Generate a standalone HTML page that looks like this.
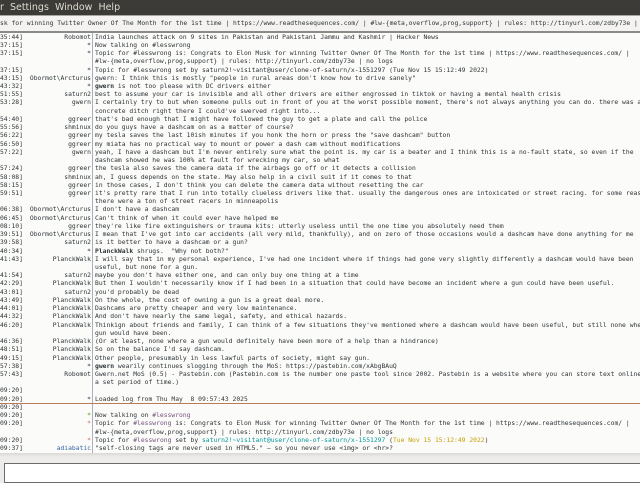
<!DOCTYPE html>
<html><head><meta charset="utf-8"><style>
*{margin:0;padding:0;box-sizing:border-box}
body{width:640px;height:480px;overflow:hidden;background:#edeceb;position:relative;font-family:"DejaVu Sans Mono","Liberation Mono",monospace;color:#2e3436}
#menu{position:absolute;left:0;top:0;width:640px;height:15px;background:#3c3b37;color:#dfdbd2;font-family:"DejaVu Sans","Liberation Sans",sans-serif;font-size:9.5px;line-height:15px;white-space:pre}
#topic{position:absolute;left:0;top:15px;width:640px;height:18px;background:#f4f3f2;border-top:1px solid #a8a6a2;border-bottom:2px solid #8c8a86;font-size:6.35px;line-height:15px;white-space:pre;overflow:hidden;padding-left:0}
#chat{position:absolute;left:0;top:33px;width:640px;height:420px;background:#fbfbfa;overflow:hidden}
#sep{position:absolute;left:92px;top:0;width:1px;height:420px;background:#aab0bb}
.r{position:absolute;left:0;width:640px;height:8.23px;font-size:6.35px;line-height:8.23px;white-space:pre}
.t{position:absolute;left:-15.3px;top:0}
.n{position:absolute;right:549px;top:0;text-align:right}
.m{position:absolute;left:95px;top:0}
b{font-weight:bold}
.g{color:#4e9a06}.p{color:#75507b}.c{color:#06989a}.y{color:#c4a000}.bl{color:#3465a4}.rd{color:#cc6666}
#mark{position:absolute;left:0;top:370px;width:640px;height:1px;background:#b87a5a}
#inp{position:absolute;left:4px;top:463px;width:640px;height:20px;background:#fff;border:1px solid #6b6b6b;border-right:none}
#shade{position:absolute;left:0;top:453px;width:640px;height:4px;background:linear-gradient(#d9d8d6,#edeceb)}
</style></head><body>
<div id="menu">r  Settings  Window  Help</div>
<div id="topic">sk for winning Twitter Owner Of The Month for the 1st time | https://www.readthesequences.com/ | #lw-{meta,overflow,prog,support} | rules: http://tinyurl.com/zdby73e |</div>
<div id="chat">
<div id="sep"></div>
<div id="mark"></div>
<div id="rows"></div>
</div>
<div id="shade"></div>
<div id="inp"></div>
<div style="position:absolute;left:0;top:0">
</div>
<script></script>
<div id="lines" style="position:absolute;left:0;top:33.6px;width:640px;height:420px;overflow:hidden">
<div class="r" style="top:0px"><span class="t">[12:35:44]</span><span class="n">Robomot</span><span class="m">India launches attack on 9 sites in Pakistan and Pakistani Jammu and Kashmir | Hacker News</span></div>
<div class="r" style="top:8.23px"><span class="t">[12:37:15]</span><span class="n">*</span><span class="m">Now talking on #lesswrong</span></div>
<div class="r" style="top:16.46px"><span class="t">[12:37:15]</span><span class="n">*</span><span class="m">Topic for #lesswrong is: Congrats to Elon Musk for winning Twitter Owner Of The Month for the 1st time | https://www.readthesequences.com/ |</span></div>
<div class="r" style="top:24.69px"><span class="m">#lw-{meta,overflow,prog,support} | rules: http://tinyurl.com/zdby73e | no logs</span></div>
<div class="r" style="top:32.92px"><span class="t">[12:37:15]</span><span class="n">*</span><span class="m">Topic for #lesswrong set by saturn2!~visitant@user/clone-of-saturn/x-1551297 (Tue Nov 15 15:12:49 2022)</span></div>
<div class="r" style="top:41.15px"><span class="t">[12:43:15]</span><span class="n">Obormot\Arcturus</span><span class="m">gwern: I think this is mostly "people in rural areas don't know how to drive sanely"</span></div>
<div class="r" style="top:49.38px"><span class="t">[12:43:32]</span><span class="n">*</span><span class="m"><b>gwern</b> is not too please with DC drivers either</span></div>
<div class="r" style="top:57.61px"><span class="t">[12:51:55]</span><span class="n">saturn2</span><span class="m">best to assume your car is invisible and all other drivers are either engrossed in tiktok or having a mental health crisis</span></div>
<div class="r" style="top:65.84px"><span class="t">[12:53:28]</span><span class="n">gwern</span><span class="m">I certainly try to but when someone pulls out in front of you at the worst possible moment, there's not always anything you can do. there was a</span></div>
<div class="r" style="top:74.07px"><span class="m">concrete ditch right there I could've swerved right into...</span></div>
<div class="r" style="top:82.3px"><span class="t">[12:54:40]</span><span class="n">ggreer</span><span class="m">that's bad enough that I might have followed the guy to get a plate and call the police</span></div>
<div class="r" style="top:90.53px"><span class="t">[12:55:56]</span><span class="n">shminux</span><span class="m">do you guys have a dashcam on as a matter of course?</span></div>
<div class="r" style="top:98.76px"><span class="t">[12:56:22]</span><span class="n">ggreer</span><span class="m">my tesla saves the last 10ish minutes if you honk the horn or press the "save dashcam" button</span></div>
<div class="r" style="top:106.99px"><span class="t">[12:56:50]</span><span class="n">ggreer</span><span class="m">my miata has no practical way to mount or power a dash cam without modifications</span></div>
<div class="r" style="top:115.22px"><span class="t">[12:57:22]</span><span class="n">gwern</span><span class="m">yeah, I have a dashcam but I'm never entirely sure what the point is. my car is a beater and I think this is a no-fault state, so even if the</span></div>
<div class="r" style="top:123.45px"><span class="m">dashcam showed he was 100% at fault for wrecking my car, so what</span></div>
<div class="r" style="top:131.68px"><span class="t">[12:57:24]</span><span class="n">ggreer</span><span class="m">the tesla also saves the camera data if the airbags go off or it detects a collision</span></div>
<div class="r" style="top:139.91px"><span class="t">[12:58:08]</span><span class="n">shminux</span><span class="m">ah, I guess depends on the state. May also help in a civil suit if it comes to that</span></div>
<div class="r" style="top:148.14px"><span class="t">[12:58:15]</span><span class="n">ggreer</span><span class="m">in those cases, I don't think you can delete the camera data without resetting the car</span></div>
<div class="r" style="top:156.37px"><span class="t">[12:59:51]</span><span class="n">ggreer</span><span class="m">it's pretty rare that I run into totally clueless drivers like that. usually the dangerous ones are intoxicated or street racing. for some reason</span></div>
<div class="r" style="top:164.6px"><span class="m">there were a ton of street racers in minneapolis</span></div>
<div class="r" style="top:172.83px"><span class="t">[13:06:38]</span><span class="n">Obormot\Arcturus</span><span class="m">I don't have a dashcam</span></div>
<div class="r" style="top:181.06px"><span class="t">[13:06:45]</span><span class="n">Obormot\Arcturus</span><span class="m">Can't think of when it could ever have helped me</span></div>
<div class="r" style="top:189.29px"><span class="t">[13:08:10]</span><span class="n">ggreer</span><span class="m">they're like fire extinguishers or trauma kits: utterly useless until the one time you absolutely need them</span></div>
<div class="r" style="top:197.52px"><span class="t">[13:39:51]</span><span class="n">Obormot\Arcturus</span><span class="m">I mean that I've got into car accidents (all very mild, thankfully), and on zero of those occasions would a dashcam have done anything for me</span></div>
<div class="r" style="top:205.75px"><span class="t">[13:39:58]</span><span class="n">saturn2</span><span class="m">is it better to have a dashcam or a gun?</span></div>
<div class="r" style="top:213.98px"><span class="t">[13:40:34]</span><span class="n">*</span><span class="m"><b>PlanckWalk</b> shrugs.  "Why not both?"</span></div>
<div class="r" style="top:222.21px"><span class="t">[13:41:43]</span><span class="n">PlanckWalk</span><span class="m">I will say that in my personal experience, I've had one incident where if things had gone very slightly differently a dashcam would have been</span></div>
<div class="r" style="top:230.44px"><span class="m">useful, but none for a gun.</span></div>
<div class="r" style="top:238.67px"><span class="t">[13:41:54]</span><span class="n">saturn2</span><span class="m">maybe you don't have either one, and can only buy one thing at a time</span></div>
<div class="r" style="top:246.9px"><span class="t">[13:42:29]</span><span class="n">PlanckWalk</span><span class="m">But then I wouldn't necessarily know if I had been in a situation that could have become an incident where a gun could have been useful.</span></div>
<div class="r" style="top:255.13px"><span class="t">[13:43:01]</span><span class="n">saturn2</span><span class="m">you'd probably be dead</span></div>
<div class="r" style="top:263.36px"><span class="t">[13:43:49]</span><span class="n">PlanckWalk</span><span class="m">On the whole, the cost of owning a gun is a great deal more.</span></div>
<div class="r" style="top:271.59px"><span class="t">[13:44:01]</span><span class="n">PlanckWalk</span><span class="m">Dashcams are pretty cheaper and very low maintenance.</span></div>
<div class="r" style="top:279.82px"><span class="t">[13:44:32]</span><span class="n">PlanckWalk</span><span class="m">And don't have nearly the same legal, safety, and ethical hazards.</span></div>
<div class="r" style="top:288.05px"><span class="t">[13:46:20]</span><span class="n">PlanckWalk</span><span class="m">Thinkign about friends and family, I can think of a few situations they've mentioned where a dashcam would have been useful, but still none where a</span></div>
<div class="r" style="top:296.28px"><span class="m">gun would have been.</span></div>
<div class="r" style="top:304.51px"><span class="t">[13:46:36]</span><span class="n">PlanckWalk</span><span class="m">(Or at least, none where a gun would definitely have been more of a help than a hindrance)</span></div>
<div class="r" style="top:312.74px"><span class="t">[13:48:51]</span><span class="n">PlanckWalk</span><span class="m">So on the balance I'd say dashcam.</span></div>
<div class="r" style="top:320.97px"><span class="t">[13:49:15]</span><span class="n">PlanckWalk</span><span class="m">Other people, presumably in less lawful parts of society, might say gun.</span></div>
<div class="r" style="top:329.2px"><span class="t">[13:57:38]</span><span class="n">*</span><span class="m"><b>gwern</b> wearily continues slogging through the MoS: https://pastebin.com/xAbgBAuQ</span></div>
<div class="r" style="top:337.43px"><span class="t">[13:57:43]</span><span class="n">Robomot</span><span class="m">Gwern.net MoS (0.5) - Pastebin.com (Pastebin.com is the number one paste tool since 2002. Pastebin is a website where you can store text online for</span></div>
<div class="r" style="top:345.66px"><span class="m">a set period of time.)</span></div>
<div class="r" style="top:353.89px"><span class="t">[10:09:20]</span></div>
<div class="r" style="top:362.12px"><span class="t">[10:09:20]</span><span class="n">*</span><span class="m">Loaded log from Thu May  8 09:57:43 2025</span></div>
<div style="position:absolute;left:0;top:369.5px;width:640px;height:1px;background:#b87a5a"></div>
<div class="r" style="top:370.35px"><span class="t">[10:09:20]</span></div>
<div class="r" style="top:378.58px"><span class="t">[10:09:20]</span><span class="n g">*</span><span class="m">Now talking on <span class="p">#lesswrong</span></span></div>
<div class="r" style="top:386.81px"><span class="t">[10:09:20]</span><span class="n rd">*</span><span class="m">Topic for <span class="p">#lesswrong</span> is: Congrats to Elon Musk for winning Twitter Owner Of The Month for the 1st time | https://www.readthesequences.com/ |</span></div>
<div class="r" style="top:395.04px"><span class="m">#lw-{meta,overflow,prog,support} | rules: http://tinyurl.com/zdby73e | no logs</span></div>
<div class="r" style="top:403.27px"><span class="t">[10:09:20]</span><span class="n rd">*</span><span class="m">Topic for <span class="p">#lesswrong</span> set by <span class="c">saturn2!~visitant@user/clone-of-saturn/x-1551297</span> (<span class="y">Tue Nov 15 15:12:49 2022</span>)</span></div>
<div class="r" style="top:411.5px"><span class="t">[10:09:37]</span><span class="n bl">adiabatic</span><span class="m">"self-closing tags are never used in HTML5." — so you never use &lt;img&gt; or &lt;hr&gt;?</span></div>
</div>
</body></html>
